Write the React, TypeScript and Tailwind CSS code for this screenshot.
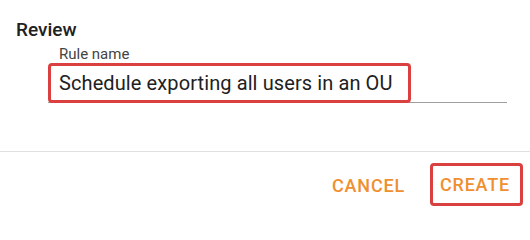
import React from "react";

export default function App() {
  return (
    <div
      className="w-[530px] h-[213px] bg-white relative overflow-hidden"
      style={{ fontFamily: "Roboto, 'Liberation Sans', sans-serif" }}
    >
      <div className="pl-[16px] pt-[19px]">
        <div className="text-[19px] leading-[22px] font-medium text-[#212121]">Review</div>
      </div>
      <div className="ml-[48px] mr-[23px] mt-[4px]">
        <div className="pl-[11px] text-[15px] leading-[18px] text-[#444444]">Rule name</div>
        <div className="relative">
          <div className="border-b border-[#9e9e9e] pt-[8px] pb-[7px] pl-[11px] text-[20px] leading-[24px] tracking-[0.1px] text-[#212121]">
            Schedule exporting all users in an OU
          </div>
          <div className="absolute left-0 top-0 w-[363px] h-[40px] border-[3px] border-[#d9403f] rounded-[4px]" />
        </div>
      </div>
      <div className="mt-[48px] border-t border-[#e0e0e0]" />
      <div className="flex justify-end items-center pr-[20px] pt-[22px] gap-[35px]">
        <button className="text-[18px] leading-[22px] font-medium tracking-[0.8px] text-[#ef8f2f]">CANCEL</button>
        <div className="relative">
          <button className="text-[18px] leading-[22px] font-medium tracking-[0.8px] text-[#ef8f2f]">CREATE</button>
          <div className="absolute -left-[10px] -right-[13px] -top-[11px] -bottom-[8px] border-[3px] border-[#d9403f] rounded-[4px]" />
        </div>
      </div>
    </div>
  );
}
